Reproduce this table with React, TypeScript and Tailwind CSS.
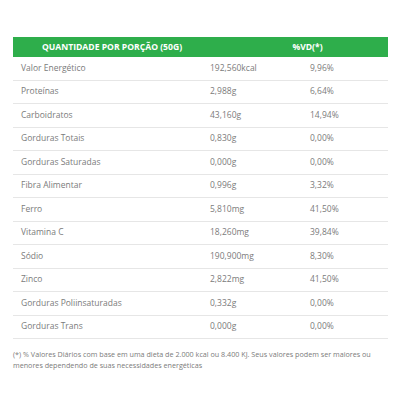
const rows: [string, string, string][] = [
  ["Valor Energético", "192,560kcal", "9,96%"],
  ["Proteínas", "2,988g", "6,64%"],
  ["Carboidratos", "43,160g", "14,94%"],
  ["Gorduras Totais", "0,830g", "0,00%"],
  ["Gorduras Saturadas", "0,000g", "0,00%"],
  ["Fibra Alimentar", "0,996g", "3,32%"],
  ["Ferro", "5,810mg", "41,50%"],
  ["Vitamina C", "18,260mg", "39,84%"],
  ["Sódio", "190,900mg", "8,30%"],
  ["Zinco", "2,822mg", "41,50%"],
  ["Gorduras Poliinsaturadas", "0,332g", "0,00%"],
  ["Gorduras Trans", "0,000g", "0,00%"],
];

const App = () => {
  return (
    <div
      className="w-[400px] h-[400px] bg-white pt-[37px] px-[13px] text-[#7b7b7b]"
      style={{ fontFamily: '"Open Sans", sans-serif' }}
    >
      <div className="w-[375px]">
        <div className="flex h-[20px] items-center bg-[#2eae4b] text-white font-bold text-[8.6px]">
          <div className="w-[198px] text-center">QUANTIDADE POR PORÇÃO (50G)</div>
          <div className="flex-1 text-center pl-[16px]">%VD(*)</div>
        </div>
        {rows.map(([label, amount, vd]) => (
          <div
            key={label}
            className="flex h-[23.5px] items-center border-b border-[#e6e6e6] text-[8.5px]"
          >
            <div className="w-[189px] pl-[8px]">{label}</div>
            <div className="w-[100px] pl-[8px]">{amount}</div>
            <div className="flex-1 pl-[8px]">{vd}</div>
          </div>
        ))}
      </div>
      <p className="mt-[10px] text-[7.2px] leading-[11px] pr-[10px]">
        (*) % Valores Diários com base em uma dieta de 2.000 kcal ou 8.400 KJ. Seus valores podem ser maiores ou
        menores dependendo de suas necessidades energéticas
      </p>
    </div>
  );
};

export default App;
